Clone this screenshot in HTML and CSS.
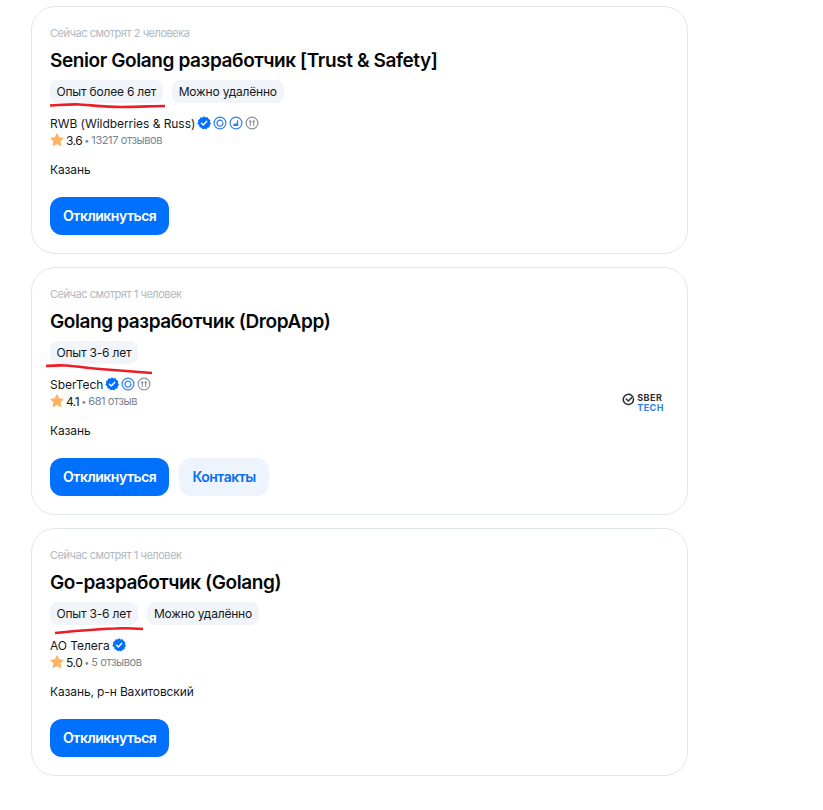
FILE: index.html
```html
<!DOCTYPE html>
<html lang="ru">
<head>
  <meta charset="UTF-8">
  <title>Вакансии</title>
  <link rel="stylesheet" href="styles.css">
</head>
<body>
  <svg width="0" height="0" class="defs">
    <symbol id="check" viewBox="0 0 14 14">
      <path fill="#0070ff" d="M7 .3l1.700 1.100 2-.2.8 1.900 1.800.9-.3 2 1 1.700-1.300 1.500-.1 2-2 .5-1.200 1.600-1.900-.6-1.900.6-1.200-1.600-2-.5-.1-2L.3 7.700l1-1.700-.3-2 1.800-.9.8-1.900 2 .2z"/>
      <path fill="none" stroke="#fff" stroke-width="1.500" stroke-linecap="round" stroke-linejoin="round" d="M4.500 7.200l1.800 1.700 3.300-3.500"/>
    </symbol>
    <symbol id="circle-a" viewBox="0 0 14 14">
      <circle cx="7" cy="7" r="5.900" fill="none" stroke="#2d7ff0" stroke-width="1.200"/>
      <path fill="none" stroke="#2d7ff0" stroke-width="1.300" stroke-linecap="round" d="M9.500 5.500A3 3 0 1 0 10 7"/>
    </symbol>
    <symbol id="circle-b" viewBox="0 0 14 14">
      <circle cx="7" cy="7" r="5.900" fill="none" stroke="#2d7ff0" stroke-width="1.200"/>
      <path fill="#2d7ff0" d="M3.800 10l5.400-.1V4L7.800 4.400v3.200H5z"/>
    </symbol>
    <symbol id="circle-c" viewBox="0 0 14 14">
      <circle cx="7" cy="7" r="5.900" fill="none" stroke="#8a939e" stroke-width="1.200"/>
      <path fill="none" stroke="#8a939e" stroke-width="1.100" d="M5.300 3.800v6.400M8.700 3.800v6.400M4 5.800h2.600M7.400 5.800h2.600"/>
    </symbol>
    <symbol id="star" viewBox="0 0 14 14">
      <path fill="#fdb366" d="M7 .7l1.900 4 4.400.6-3.200 3 .8 4.400L7 10.600l-3.900 2.100.8-4.400-3.200-3 4.400-.6z" stroke="#fdb366" stroke-linejoin="round"/>
    </symbol>
  </svg>

  <div class="list">

    <!-- Вакансия 1 -->
    <div class="card">
      <div class="watching">Сейчас смотрят 2 человека</div>
      <h2>Senior Golang разработчик [Trust &amp; Safety]</h2>
      <div class="tags">
        <span class="tag">Опыт более 6 лет</span>
        <span class="tag">Можно удалённо</span>
      </div>
      <div class="company">
        <span>RWB (Wildberries &amp; Russ)</span>
        <svg class="icon"><use href="#check"/></svg>
        <svg class="icon"><use href="#circle-a"/></svg>
        <svg class="icon"><use href="#circle-b"/></svg>
        <svg class="icon"><use href="#circle-c"/></svg>
      </div>
      <div class="rating">
        <svg class="icon"><use href="#star"/></svg>
        <span class="score">3.6</span><span class="dot">•</span><span class="reviews">13217 отзывов</span>
      </div>
      <div class="city">Казань</div>
      <div class="actions">
        <button class="btn primary">Откликнуться</button>
      </div>
      <svg class="scribble one" width="130" height="12" viewBox="0 0 130 12">
        <path d="M1 3.500C12 3 22 2 31 2.500C45 3.500 58 5 72 5C90 5 105 4 116 4" />
      </svg>
    </div>

    <!-- Вакансия 2 -->
    <div class="card">
      <div class="watching">Сейчас смотрят 1 человек</div>
      <h2>Golang разработчик (DropApp)</h2>
      <div class="tags">
        <span class="tag">Опыт 3-6 лет</span>
      </div>
      <div class="company">
        <span>SberTech</span>
        <svg class="icon"><use href="#check"/></svg>
        <svg class="icon"><use href="#circle-a"/></svg>
        <svg class="icon"><use href="#circle-c"/></svg>
      </div>
      <div class="rating">
        <svg class="icon"><use href="#star"/></svg>
        <span class="score">4.1</span><span class="dot">•</span><span class="reviews">681 отзыв</span>
      </div>
      <div class="city">Казань</div>
      <div class="actions">
        <button class="btn primary">Откликнуться</button>
        <button class="btn secondary">Контакты</button>
      </div>
      <div class="logo">
        <svg width="13" height="13" viewBox="0 0 14 14">
          <path fill="none" stroke="#2b2f33" stroke-width="1.600" stroke-linecap="round" d="M12.300 6A5.500 5.500 0 1 1 10.500 2.800"/>
          <path fill="none" stroke="#2b2f33" stroke-width="1.600" stroke-linecap="round" stroke-linejoin="round" d="M4.500 6.500l2.300 2.200 5-5"/>
        </svg>
        <div class="logo-text"><span>SBER</span><span class="tech">TECH</span></div>
      </div>
      <svg class="scribble two" width="130" height="12" viewBox="0 0 130 12">
        <path d="M1 3C8 2.500 14 2 20 2.500C35 3.500 45 5.500 55 6C75 7.500 92 9 107 10" />
      </svg>
    </div>

    <!-- Вакансия 3 -->
    <div class="card">
      <div class="watching">Сейчас смотрят 1 человек</div>
      <h2>Go-разработчик (Golang)</h2>
      <div class="tags">
        <span class="tag">Опыт 3-6 лет</span>
        <span class="tag">Можно удалённо</span>
      </div>
      <div class="company">
        <span>АО Телега</span>
        <svg class="icon"><use href="#check"/></svg>
      </div>
      <div class="rating">
        <svg class="icon"><use href="#star"/></svg>
        <span class="score">5.0</span><span class="dot">•</span><span class="reviews">5 отзывов</span>
      </div>
      <div class="city">Казань, р-н Вахитовский</div>
      <div class="actions">
        <button class="btn primary">Откликнуться</button>
      </div>
      <svg class="scribble three" width="130" height="12" viewBox="0 0 130 12">
        <path d="M1 9C15 7.500 25 6.500 36 6C45 5.500 52 4.500 61 4.500C72 4 82 4.500 89 5" />
      </svg>
    </div>

  </div>
</body>
</html>
```

FILE: styles.css
```css
body {
  margin: 0;
  font-family: Inter, "Liberation Sans", sans-serif;
  background: #ffffff;
  color: #0c1015;
}

.defs {
  display: block;
  height: 0;
}

.list {
  width: 657px;
  margin-left: 31px;
  padding-top: 6px;
  display: flex;
  flex-direction: column;
  gap: 13px;
}

.card {
  position: relative;
  height: 248px;
  box-sizing: border-box;
  padding: 19px 18px;
  background: #ffffff;
  border: 1px solid #e2e7ef;
  border-radius: 24px;
}

.watching {
  font-size: 11px;
  line-height: 14px;
  letter-spacing: -0.45px;
  color: #b0b8c1;
}

h2 {
  margin: 7px 0 0;
  font-size: 19px;
  line-height: 28px;
  font-weight: 600;
  letter-spacing: -0.4px;
  color: #050709;
}

/* Плашки опыта */
.tags {
  display: flex;
  gap: 9px;
  margin-top: 5px;
}

.tag {
  height: 23px;
  line-height: 23px;
  padding: 0 7px 0 6.500px;
  font-size: 12px;
  letter-spacing: -0.2px;
  background: #f1f5f9;
  border-radius: 8px;
  color: #14181d;
}

.company {
  display: flex;
  align-items: center;
  gap: 2px;
  margin-top: 11px;
  height: 18px;
  font-size: 12px;
  letter-spacing: -0.05px;
  color: #14181d;
}

.icon {
  width: 14px;
  height: 14px;
  flex: none;
}

.rating {
  display: flex;
  align-items: center;
  height: 16px;
  font-size: 12px;
}

.rating .icon {
  margin-right: 2px;
}

.score {
  letter-spacing: -0.5px;
  color: #14181d;
}

.dot {
  margin: 0 2px;
  color: #7f8c9a;
  font-size: 9px;
}

.reviews {
  font-size: 11px;
  letter-spacing: -0.4px;
  color: #768594;
}

.city {
  margin-top: 14px;
  font-size: 12px;
  line-height: 16px;
  letter-spacing: -0.13px;
  color: #14181d;
}

.actions {
  display: flex;
  gap: 10px;
  margin-top: 19px;
}

.btn {
  height: 38px;
  border: none;
  border-radius: 12px;
  padding: 0 13px 1px;
  font-family: inherit;
  font-size: 14px;
  font-weight: 600;
  letter-spacing: -0.47px;
  cursor: pointer;
}

.primary {
  background: #0070ff;
  color: #ffffff;
}

.secondary {
  background: #edf4fe;
  color: #0a6ef0;
}

/* Логотип компании справа */
.logo {
  position: absolute;
  right: 23px;
  top: 125px;
  display: flex;
  align-items: flex-start;
  gap: 2px;
}

.logo-text {
  display: flex;
  flex-direction: column;
  font-size: 9px;
  line-height: 10px;
  font-weight: 700;
  letter-spacing: 0.5px;
  color: #2b2f33;
}

.logo-text .tech {
  color: #2d7ff0;
}

/* Красные подчёркивания от руки */
.scribble {
  position: absolute;
  top: 95px;
  fill: none;
  stroke: #ee1c25;
  stroke-width: 2.600;
}

.scribble.one {
  left: 17px;
}

.scribble.two {
  left: 13px;
}

.scribble.three {
  left: 22px;
}
```
